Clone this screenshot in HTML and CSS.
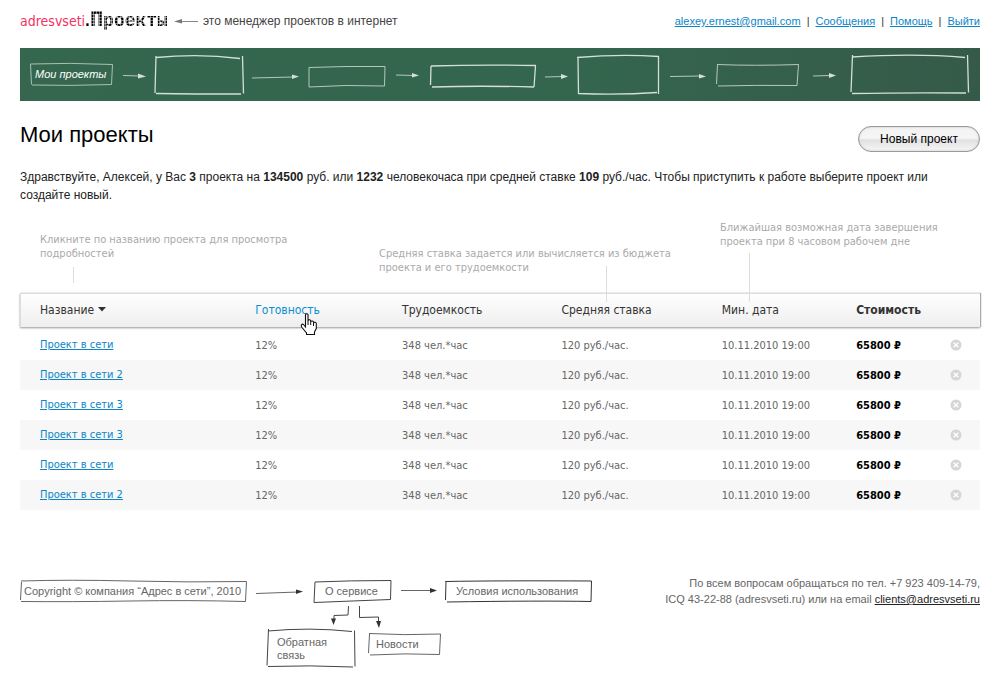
FILE: index.html
```html
<!DOCTYPE html>
<html lang="ru">
<head>
<meta charset="utf-8">
<meta name="viewport" content="width=device-width, initial-scale=1">
<title>adresvseti.Проекты</title>
<link rel="stylesheet" href="styles.css">
</head>
<body>
<header class="top">
  <a class="logo" href="#"><span class="logo-name">adresvseti</span><span class="logo-dot">.</span><span class="logo-product">Проекты</span></a>
  <svg class="logo-arrow" width="24" height="8" viewBox="0 0 24 8" aria-hidden="true"><path d="M7 4.500H24" stroke="#888" fill="none"/><path d="M0 4.500L8 2V6.500Z" fill="#777"/></svg>
  <p class="tagline">это менеджер проектов в интернет</p>
  <nav class="user-links">
    <a href="#">alexey.ernest@gmail.com</a><span>|</span><a href="#">Сообщения</a><span>|</span><a href="#">Помощь</a><span>|</span><a href="#">Выйти</a>
  </nav>
</header>

<nav class="board" aria-label="Разделы">
  <a class="board-link" href="#">
    <svg class="board-frame" width="84" height="25" viewBox="29 62 84 25" aria-hidden="true"><path d="M30.500 64Q70 62.500 112.500 64.500L111.500 84.500Q70 86 32 85M30.500 64L31.500 84.500"/></svg>
    <span>Мои проекты</span>
  </a>
  <svg class="chalk" width="40" height="53" viewBox="113 48 40 53" aria-hidden="true"><path d="M123 75.500L140 76"/><path class="tip" d="M138 73.500L146 76.500L138 78.500Z"/></svg>
  <svg class="chalk" width="93" height="53" viewBox="153 48 93 53" aria-hidden="true"><path class="strong" d="M156 57.500Q200 53.500 240 58.500M156 56L155 93M242.500 56L243.500 93.500M156 93.500Q195 94 241 94"/></svg>
  <svg class="chalk" width="60" height="53" viewBox="246 48 60 53" aria-hidden="true"><path d="M252 78L294 77"/><path class="tip" d="M292 74.500L299 76.500L292 79Z"/></svg>
  <svg class="chalk" width="82" height="53" viewBox="306 48 82 53" aria-hidden="true"><path d="M309 67.500Q345 66 385 66.500L384.500 86Q345 84.500 309 87L309 67.500"/></svg>
  <svg class="chalk" width="38" height="53" viewBox="388 48 38 53" aria-hidden="true"><path d="M396 75L414 75.500"/><path class="tip" d="M412 73L419 75.500L412 77.500Z"/></svg>
  <svg class="chalk" width="114" height="53" viewBox="426 48 114 53" aria-hidden="true"><path class="strong" d="M431 66Q480 64.500 536 65.500M431 66L430.500 85M535.500 66L534 87M432 87Q480 85.500 534 87"/></svg>
  <svg class="chalk" width="34" height="53" viewBox="540 48 34 53" aria-hidden="true"><path d="M545 77L563 76.500"/><path class="tip" d="M561 74L568 76.500L561 79Z"/></svg>
  <svg class="chalk" width="88" height="53" viewBox="574 48 88 53" aria-hidden="true"><path class="strong" d="M577 57.500Q620 54 658.500 56.500L658.500 94M578 57L578.500 93.500Q620 95 657 92.500"/></svg>
  <svg class="chalk" width="50" height="53" viewBox="662 48 50 53" aria-hidden="true"><path d="M670 76.500L701 76"/><path class="tip" d="M699 74L706 76.500L699 78.500Z"/></svg>
  <svg class="chalk" width="92" height="53" viewBox="712 48 92 53" aria-hidden="true"><path d="M717 64.500Q755 66 798.500 64.500L797 85.500Q755 85 718 86M717.500 64.500L716.500 84"/></svg>
  <svg class="chalk" width="40" height="53" viewBox="804 48 40 53" aria-hidden="true"><path d="M813 76L831 75.500"/><path class="tip" d="M829 73L836 75.500L829 78Z"/></svg>
  <svg class="chalk" width="130" height="53" viewBox="844 48 130 53" aria-hidden="true"><path class="strong" d="M852 57Q915 53 965 57.500M852.500 55L851 92M967.500 55L968.500 92.500M852 93.500Q905 92.500 966 93"/></svg>
</nav>

<main>
  <div class="title-row">
    <h1>Мои проекты</h1>
    <button class="new-project" type="button">Новый проект</button>
  </div>
  <p class="intro">Здравствуйте, Алексей, у Вас <b>3</b> проекта на <b>134500</b> руб. или <b>1232</b> человекочаса при средней ставке <b>109</b> руб./час. Чтобы приступить к работе выберите проект или создайте новый.</p>

  <div class="hints">
    <p class="hint hint-name">Кликните по названию проекта для просмотра подробностей</p>
    <p class="hint hint-rate">Средняя ставка задается или вычисляется из бюджета проекта и его трудоемкости</p>
    <p class="hint hint-date">Ближайшая возможная дата завершения проекта при 8 часовом рабочем дне</p>
  </div>

  <table class="projects">
    <colgroup><col class="c-name"><col class="c-ready"><col class="c-work"><col class="c-rate"><col class="c-date"><col class="c-cost"><col class="c-del"></colgroup>
    <thead>
      <tr>
        <th scope="col">Название <svg class="sort" width="8" height="5" viewBox="0 0 8 5" aria-hidden="true"><path d="M0 0H8L4 4.500Z" fill="#333"/></svg></th>
        <th scope="col" class="active">Готовность
          <svg class="pointer" width="18" height="23" viewBox="0 0 18 23" aria-hidden="true"><path d="M5.500 14V2Q5.500 .7 6.800 .7T8 2V8Q8.200 6.600 9.500 6.800T10.700 8.200V9Q11 7.700 12.300 8T13.500 9.300V10Q14 8.900 15.200 9.300T16.300 11V15.500L14.500 19V21.500H6.500V20L2 14.500Q.7 12.500 1.800 11.500T4.300 12.500Z" fill="#fff" stroke="#111" stroke-width="1.100"/><path d="M8 8V12M10.700 9V12M13.500 10V13" stroke="#111" fill="none"/></svg></th>
        <th scope="col">Трудоемкость</th>
        <th scope="col">Средняя ставка</th>
        <th scope="col">Мин. дата</th>
        <th scope="col" class="cost">Стоимость</th>
        <th aria-label="Действия"></th>
      </tr>
    </thead>
    <tbody>
      <tr><td><a href="#">Проект в сети</a></td><td>12%</td><td>348 чел.*час</td><td>120 руб./час.</td><td>10.11.2010 19:00</td><td class="cost">65800 ₽</td><td><button class="delete" type="button" aria-label="Удалить"><svg width="12" height="12" viewBox="0 0 12 12"><circle cx="6" cy="6" r="5.500"/><path d="M3.700 3.700L8.300 8.300M8.300 3.700L3.700 8.300"/></svg></button></td></tr>
      <tr><td><a href="#">Проект в сети 2</a></td><td>12%</td><td>348 чел.*час</td><td>120 руб./час.</td><td>10.11.2010 19:00</td><td class="cost">65800 ₽</td><td><button class="delete" type="button" aria-label="Удалить"><svg width="12" height="12" viewBox="0 0 12 12"><circle cx="6" cy="6" r="5.500"/><path d="M3.700 3.700L8.300 8.300M8.300 3.700L3.700 8.300"/></svg></button></td></tr>
      <tr><td><a href="#">Проект в сети 3</a></td><td>12%</td><td>348 чел.*час</td><td>120 руб./час.</td><td>10.11.2010 19:00</td><td class="cost">65800 ₽</td><td><button class="delete" type="button" aria-label="Удалить"><svg width="12" height="12" viewBox="0 0 12 12"><circle cx="6" cy="6" r="5.500"/><path d="M3.700 3.700L8.300 8.300M8.300 3.700L3.700 8.300"/></svg></button></td></tr>
      <tr><td><a href="#">Проект в сети 3</a></td><td>12%</td><td>348 чел.*час</td><td>120 руб./час.</td><td>10.11.2010 19:00</td><td class="cost">65800 ₽</td><td><button class="delete" type="button" aria-label="Удалить"><svg width="12" height="12" viewBox="0 0 12 12"><circle cx="6" cy="6" r="5.500"/><path d="M3.700 3.700L8.300 8.300M8.300 3.700L3.700 8.300"/></svg></button></td></tr>
      <tr><td><a href="#">Проект в сети</a></td><td>12%</td><td>348 чел.*час</td><td>120 руб./час.</td><td>10.11.2010 19:00</td><td class="cost">65800 ₽</td><td><button class="delete" type="button" aria-label="Удалить"><svg width="12" height="12" viewBox="0 0 12 12"><circle cx="6" cy="6" r="5.500"/><path d="M3.700 3.700L8.300 8.300M8.300 3.700L3.700 8.300"/></svg></button></td></tr>
      <tr><td><a href="#">Проект в сети 2</a></td><td>12%</td><td>348 чел.*час</td><td>120 руб./час.</td><td>10.11.2010 19:00</td><td class="cost">65800 ₽</td><td><button class="delete" type="button" aria-label="Удалить"><svg width="12" height="12" viewBox="0 0 12 12"><circle cx="6" cy="6" r="5.500"/><path d="M3.700 3.700L8.300 8.300M8.300 3.700L3.700 8.300"/></svg></button></td></tr>
    </tbody>
  </table>
</main>

<footer class="bottom">
  <div class="diagram">
    <svg class="diagram-lines" width="574" height="90" viewBox="19 579 574 90" aria-hidden="true">
      <g fill="none" stroke="#666">
        <path d="M21 581Q70 579.500 130 581T246.500 581.500L245.500 601.500Q190 600 130 601T21 601.500M21.500 582L20.500 600"/>
        <path d="M256 593.500L298 592"/>
        <path stroke="#444" d="M315 582Q350 580.500 391 580.500L390.500 599.500L314 602.500L315 582"/>
        <path d="M401 590.500H433"/>
        <path stroke="#333" d="M445.500 581.500Q500 580.500 591.500 581L591 601.500Q540 600.500 447 602M446 581L445.500 600"/>
        <path stroke="#444" d="M348.500 606L348 615L334 615.500V620M359.500 606L359.500 617.500L378.500 617V622"/>
        <path stroke="#444" d="M268 631Q310 627 352 631.500M268.500 629L267 665.500M354.500 630.500L355 666.500M268 666.500Q310 665 353 667"/>
        <path d="M369 633.500Q405 635.500 440.500 634L439.500 654.500Q405 653 370 655M369.500 634L368.500 653"/>
      </g>
      <path fill="#333" d="M296 589.500L303 591.500L296 594ZM430 588L437 590.500L430 593ZM331 618.500H336L333.500 625ZM376 621H381L379 628Z"/>
    </svg>
    <span class="node node-copy">Copyright © компания “Адрес в сети”, 2010</span>
    <a class="node node-about" href="#">О сервисе</a>
    <a class="node node-terms" href="#">Условия использования</a>
    <a class="node node-feedback" href="#">Обратная связь</a>
    <a class="node node-news" href="#">Новости</a>
  </div>
  <p class="contacts">По всем вопросам обращаться по тел. +7 923 409-14-79,<br>ICQ 43-22-88 (adresvseti.ru) или на email <a href="#">clients@adresvseti.ru</a></p>
</footer>
</body>
</html>
```
FILE: styles.css
```css
* { box-sizing: border-box; }
body {
  margin: 0;
  padding: 0 20px 30px;
  background: #fff;
  color: #333;
  font: 12px/18px "Liberation Sans", Arial, sans-serif;
}
h1, p { margin: 0; }
a { color: #0a86c8; }
svg { display: block; }

.top { display: flex; align-items: center; height: 48px; padding-bottom: 6px; }
.logo { display: flex; align-items: baseline; color: #000; text-decoration: none; }
.logo-name { color: #f5315f; font: 14px/24px "DejaVu Sans Condensed", "Noto Sans", sans-serif; }
.logo-dot { font: bold 14px/24px "DejaVu Sans Condensed", "Noto Sans", sans-serif; }
.logo-product {
  font: bold 18px/24px "Liberation Mono", monospace;
  color: transparent;
  background:
    repeating-linear-gradient(90deg, rgba(255, 255, 255, .5) 0 1px, transparent 1px 3px),
    repeating-linear-gradient(0deg, rgba(255, 255, 255, .5) 0 1px, transparent 1px 3px),
    #000;
  background-clip: text;
}
.logo-product::first-letter { font-size: 22px; }
.logo-arrow { margin: 0 5px 0 6px; }
.tagline { color: #444; }
.user-links { display: flex; gap: 6px; margin-left: auto; font-size: 11px; }

.board {
  display: flex;
  justify-content: space-between;
  align-items: center;
  padding: 0 6px 0 9px;
  background: linear-gradient(90deg, #34674e, #34654d 60%, #355a49);
}
.board-link { position: relative; width: 84px; padding-left: 6px; color: #fff; font: italic 11px/25px "Liberation Sans", Arial, sans-serif; white-space: nowrap; text-decoration: none; }
.board-frame { position: absolute; left: 0; top: 0; fill: none; stroke: #a9c1b2; }
.board-link span { position: relative; }
.chalk { fill: none; stroke: #b4c8bc; flex: none; }
.chalk .strong { stroke: #d3dfd7; stroke-width: 1.3; }
.chalk .tip { fill: #d3dfd7; stroke: none; }

.title-row { display: flex; justify-content: space-between; align-items: flex-start; padding-top: 20px; }
h1 { color: #000; font-size: 22px; line-height: 28px; font-weight: normal; }
.new-project {
  width: 122px;
  height: 26px;
  margin-top: 5px;
  padding: 0;
  border: 1px solid #999;
  border-radius: 13px;
  background: linear-gradient(#f2f2f2, #f6f6f6 45%, #e2e2e2 55%, #f5f5f5);
  box-shadow: inset 0 0 2px #bbb;
  color: #000;
  font: 12px "Liberation Sans", Arial, sans-serif;
}
.intro { margin-top: 16px; color: #222; }

.hints { display: grid; grid-template-columns: 339fr 341fr 240fr; padding: 17px 20px 0; height: 89px; }
.hint { position: relative; color: #aaa; font: 11px/14px "DejaVu Sans Condensed", "Noto Sans", sans-serif; }
.hint::after { content: ""; position: absolute; width: 1px; background: #ddd; }
.hint-name { margin-top: 12px; max-width: 260px; }
.hint-name::after { left: 33px; top: 34px; height: 16px; }
.hint-rate { margin-top: 26px; max-width: 300px; }
.hint-rate::after { left: 227px; top: 19px; height: 36px; }
.hint-date { max-width: 230px; }
.hint-date::after { left: 29px; top: 32px; height: 49px; }

.projects { width: 100%; table-layout: fixed; border-collapse: separate; border-spacing: 0; font: 11px/14px "DejaVu Sans Condensed", "Noto Sans", sans-serif; }
.c-name { width: 24.5%; }
.c-ready { width: 15.3%; }
.c-work { width: 16.6%; }
.c-rate { width: 16.7%; }
.c-date { width: 14%; }
.c-cost { width: 9.8%; }
.projects thead tr { background: linear-gradient(#fff, #eee); box-shadow: 1px 0 1px #aaa, 0 1px 2px #999; }
.projects th { position: relative; height: 34px; padding: 0 0 2px; border-top: 1px solid #ddd; color: #333; font-size: 12px; font-weight: normal; text-align: left; }
.projects th:first-child { border-left: 1px solid #ddd; padding-left: 19px; }
.projects th.active { color: #0a8fd2; }
.projects th.cost { font-weight: bold; }
.sort { display: inline-block; vertical-align: 2px; }
.pointer { position: absolute; left: 45px; top: 19px; z-index: 1; }
.projects tbody::before { content: ""; display: block; height: 3px; }
.projects td { height: 30px; padding: 2px 0 0; color: #666; }
.projects td:first-child { padding: 0 0 0 20px; }
.projects td:last-child { padding: 0; }
.projects tbody tr:nth-child(even) { background: #f7f7f7; }
.projects td.cost { color: #000; font-weight: bold; }
.delete { display: block; padding: 0; border: 0; background: none; }
.delete circle { fill: #d6d6d6; }
.delete path { stroke: #fff; stroke-width: 1.4; fill: none; }

.bottom { display: flex; justify-content: space-between; align-items: flex-start; margin-top: 69px; color: #666; font-size: 12px; }
.diagram { position: relative; flex: none; margin-left: -1px; }
.node { position: absolute; color: #666; font-size: 11px; line-height: 13px; text-decoration: none; white-space: nowrap; }
.node-copy { left: 5px; top: 6px; }
.node-about { left: 306px; top: 6px; }
.node-terms { left: 437px; top: 6px; }
.node-feedback { left: 258px; top: 57px; width: 60px; white-space: normal; }
.node-news { left: 357px; top: 59px; }
.contacts { margin-top: -4px; font-size: 11px; line-height: 16px; text-align: right; }
.contacts a { color: #222; }
```
